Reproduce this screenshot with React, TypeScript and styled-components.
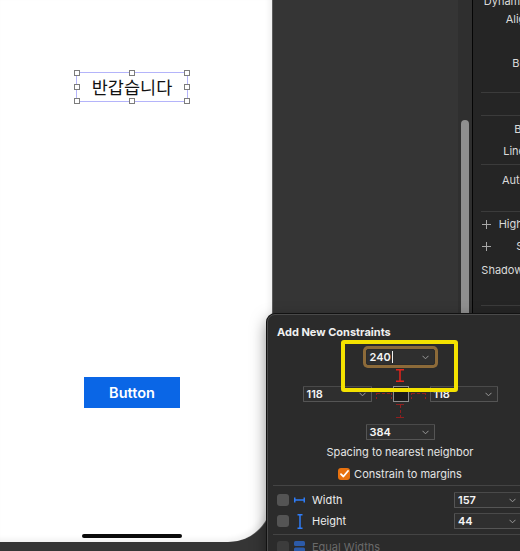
import React from "react";
import styled, { createGlobalStyle } from "styled-components";

const Global = createGlobalStyle`
  html, body { margin: 0; padding: 0; background: #353535; }
  body { font-family: Inter, "Noto Sans", sans-serif; }
`;

const Screen = styled.div`
  position: relative;
  width: 520px;
  height: 551px;
  overflow: hidden;
  display: flex;
  background: #353535;
  font-family: Inter, "Noto Sans", sans-serif;
`;

const CanvasArea = styled.div`
  width: 458px;
  flex: none;
  background: #353535;
`;

const Phone = styled.div`
  width: 272px;
  height: 542px;
  box-sizing: border-box;
  background: #ffffff;
  border-bottom-right-radius: 44px;
  padding-right: 8px;
  display: flex;
  flex-direction: column;
  align-items: center;
  box-shadow: 1px 0 0 #5e5e5e, inset -3px -3px 5px rgba(0, 0, 0, 0.06);
`;

const LabelFrame = styled.div`
  position: relative;
  margin-top: 72px;
  width: 112px;
  height: 30px;
  box-sizing: border-box;
  border: 1px solid #b4b4fa;
  display: flex;
  align-items: center;
  justify-content: center;
  font-family: "Noto Sans CJK KR", sans-serif;
  font-size: 17.5px;
  color: #111;
  line-height: 1;
`;

const Handle = styled.span<{ $x: number; $y: number }>`
  position: absolute;
  width: 6px;
  height: 6px;
  box-sizing: border-box;
  background: #fff;
  border: 1px solid #7c7c7c;
  left: calc(${(p) => p.$x}% - 3px);
  top: calc(${(p) => p.$y}% - 3px);
`;

const BlueButton = styled.div`
  margin-top: 275px;
  width: 96px;
  height: 31px;
  background: #0a66e6;
  color: #fff;
  display: flex;
  align-items: center;
  justify-content: center;
  font-size: 14.5px;
  font-weight: 600;
`;

const HomeIndicator = styled.div`
  margin-top: auto;
  margin-bottom: 4px;
  width: 100px;
  height: 4px;
  border-radius: 2px;
  background: #0a0a0a;
`;

const ScrollTrack = styled.div`
  width: 14px;
  flex: none;
  box-sizing: border-box;
  background: #2f2f2f;
  padding: 120px 0 0 3px;
  display: flex;
  flex-direction: column;
`;

const Thumb = styled.div`
  width: 8px;
  flex: 1;
  background: #8f8f8f;
  border-radius: 4px 4px 0 0;
`;

const Divider = styled.div`
  width: 1px;
  flex: none;
  background: #050505;
`;

const Inspector = styled.div`
  width: 160px;
  flex: none;
  background: #252525;
  display: flex;
  flex-direction: column;
  margin-top: -10px;
`;

const IRow = styled.div<{ $h: number }>`
  height: ${(p) => p.$h}px;
  display: grid;
  grid-template-columns: 85px 1fr;
  align-items: center;
`;

const ILabel = styled.div<{ $plus?: boolean }>`
  display: flex;
  align-items: center;
  justify-content: ${(p) => (p.$plus ? "space-between" : "flex-end")};
  padding-left: ${(p) => (p.$plus ? "9px" : "0")};
  white-space: nowrap;
  font-size: 11px;
  color: #dadada;
  line-height: 14px;
`;

const ISep = styled.div`
  height: 1px;
  margin-left: 8px;
  background: #3b3b3b;
  flex: none;
`;

const Gap = styled.div<{ $h: number }>`
  height: ${(p) => p.$h}px;
  flex: none;
`;

const Popover = styled.div`
  position: absolute;
  left: 267px;
  top: 314px;
  width: 266px;
  height: 260px;
  box-sizing: border-box;
  background: #2b2b2b;
  border: 1px solid #4a4a4a;
  border-radius: 8px;
  box-shadow: 0 0 0 1px #121212, 0 6px 16px rgba(0, 0, 0, 0.5);
  display: flex;
  flex-direction: column;
  align-items: center;
  padding-top: 10px;
  color: #e8e8e8;
`;

const Title = styled.div`
  align-self: stretch;
  padding-left: 9px;
  font-size: 11px;
  font-weight: 700;
  line-height: 14px;
  color: #f0f0f0;
`;

const Field = styled.div<{ $w?: number; $focus?: boolean }>`
  position: relative;
  width: ${(p) => p.$w ?? 69}px;
  height: 16px;
  box-sizing: border-box;
  background: #2f2f2f;
  border: 1px solid ${(p) => (p.$focus ? "#2a2a2a" : "#555555")};
  border-top-color: ${(p) => (p.$focus ? "#2a2a2a" : "#4a4a4a")};
  box-shadow: ${(p) => (p.$focus ? "0 0 0 3px #8c6a39" : "none")};
  border-radius: ${(p) => (p.$focus ? "2px" : "1px")};
  display: flex;
  align-items: center;
  padding-left: 3px;
  font-size: 11px;
  font-weight: 600;
  color: #f4f4f4;
  line-height: 14px;
`;

const Caret = styled.span`
  width: 1px;
  height: 12px;
  background: #f0f0f0;
  margin-left: 1px;
`;

const ChevronBox = styled.span`
  position: absolute;
  right: 5px;
  top: 5px;
  display: flex;
`;

const TopField = styled.div`
  margin-top: 10px;
`;

const IBeamBox = styled.div<{ $mt: number }>`
  margin-top: ${(p) => p.$mt}px;
  display: flex;
`;

const MidRow = styled.div`
  margin-top: 4px;
  display: grid;
  grid-template-columns: 69px 58px 68px;
  height: 16px;
`;

const Center = styled.div`
  position: relative;
  display: flex;
  align-items: center;
  justify-content: center;
`;

const Square = styled.div`
  width: 16px;
  height: 16px;
  box-sizing: border-box;
  background: #1c1c1c;
  border: 1px solid #8e8e8e;
`;

const BottomField = styled.div`
  margin-top: 6px;
`;

const Hint = styled.div`
  margin-top: 5px;
  font-size: 11px;
  line-height: 14px;
  color: #e4e4e4;
`;

const CheckRow = styled.div`
  margin-top: 8px;
  display: flex;
  align-items: center;
  gap: 4px;
  font-size: 11px;
  line-height: 14px;
  color: #e4e4e4;
`;

const OrangeBox = styled.span`
  width: 12px;
  height: 12px;
  border-radius: 3px;
  background: #e8720f;
  display: flex;
  align-items: center;
  justify-content: center;
`;

const PSep = styled.div<{ $mt: number }>`
  align-self: stretch;
  margin: ${(p) => p.$mt}px 0 0 5px;
  height: 1px;
  background: #444444;
  flex: none;
`;

const SizeRow = styled.div<{ $mt: number; $dim?: boolean }>`
  align-self: stretch;
  margin-top: ${(p) => p.$mt}px;
  height: 16px;
  display: flex;
  align-items: center;
  padding: 0 10px 0 9px;
  font-size: 11px;
  line-height: 14px;
  color: ${(p) => (p.$dim ? "#6a6a6a" : "#ececec")};
`;

const GrayBox = styled.span<{ $dim?: boolean }>`
  width: 12px;
  height: 12px;
  border-radius: 3px;
  background: ${(p) => (p.$dim ? "#3c3c3c" : "#545454")};
  flex: none;
`;

const IconSlot = styled.span`
  width: 11px;
  margin-left: 5px;
  display: flex;
  justify-content: center;
  flex: none;
`;

const SizeLabel = styled.span`
  margin-left: 7px;
`;

const FieldSlot = styled.div`
  margin-left: auto;
`;

const Highlight = styled.div`
  position: absolute;
  left: 73px;
  top: 25px;
  width: 117px;
  height: 52px;
  box-sizing: border-box;
  border: 4px solid #f4e200;
  border-radius: 3px;
`;

const Chevron = () => (
  <ChevronBox>
    <svg width="7" height="5" viewBox="0 0 7 5">
      <polyline points="0.5,0.8 3.5,3.8 6.5,0.8" fill="none" stroke="#9a9a9a" strokeWidth="1" />
    </svg>
  </ChevronBox>
);

const Plus = () => (
  <svg width="9" height="9" viewBox="0 0 9 9">
    <path d="M4.5 0v9M0 4.5h9" stroke="#a8a8a8" strokeWidth="1" />
  </svg>
);

const handles: [number, number][] = [
  [0, 0], [50, 0], [100, 0],
  [0, 50], [100, 50],
  [0, 100], [50, 100], [100, 100],
];

export default function App() {
  return (
    <>
      <Global />
      <Screen>
        <CanvasArea>
          <Phone>
            <LabelFrame>
              반갑습니다
              {handles.map(([x, y], i) => (
                <Handle key={i} $x={x} $y={y} />
              ))}
            </LabelFrame>
            <BlueButton>Button</BlueButton>
            <HomeIndicator />
          </Phone>
        </CanvasArea>
        <ScrollTrack>
          <Thumb />
        </ScrollTrack>
        <Divider />
        <Inspector>
          <IRow $h={22}><ILabel>Dynamic Type</ILabel></IRow>
          <IRow $h={14}><ILabel>Alignment</ILabel></IRow>
          <Gap $h={30} />
          <IRow $h={14}><ILabel>Behavior</ILabel></IRow>
          <Gap $h={22} />
          <ISep />
          <Gap $h={22} />
          <ISep />
          <IRow $h={26}><ILabel>Baseline</ILabel></IRow>
          <IRow $h={18}><ILabel>Line Break</ILabel></IRow>
          <Gap $h={4} />
          <ISep />
          <IRow $h={30}><ILabel>Autoshrink</ILabel></IRow>
          <Gap $h={16} />
          <ISep />
          <IRow $h={24}><ILabel $plus><Plus /><span>Highlighted</span></ILabel></IRow>
          <IRow $h={20}><ILabel $plus><Plus /><span>Shadow</span></ILabel></IRow>
          <IRow $h={28}><ILabel>Shadow Offset</ILabel></IRow>
          <Gap $h={21} />
          <ISep />
          <IRow $h={24}><ILabel $plus><Plus /><span>Enabled</span></ILabel></IRow>
        </Inspector>

        <Popover>
          <Title>Add New Constraints</Title>
          <TopField>
            <Field $focus>
              240<Caret />
              <Chevron />
            </Field>
          </TopField>
          <IBeamBox $mt={4}>
            <svg width="16" height="13" viewBox="0 0 16 13">
              <path d="M8 0.5v12M4 0.75h8M4 12.25h8" stroke="#e3241c" strokeWidth="1.5" fill="none" />
            </svg>
          </IBeamBox>
          <MidRow>
            <Field>
              118
              <Chevron />
            </Field>
            <Center>
              <svg width="58" height="16" viewBox="0 0 58 16" style={{ position: "absolute", left: 0, top: 0 }}>
                <g stroke="#8f2020" strokeWidth="1" fill="none">
                  <path d="M4.5 3v10M19.5 3v10M39.5 3v10M53.5 3v10" strokeDasharray="2 2" />
                  <path d="M5 7.5h14M40 7.5h13" strokeDasharray="3 2" />
                </g>
              </svg>
              <Square />
            </Center>
            <Field $w={68}>
              118
              <Chevron />
            </Field>
          </MidRow>
          <IBeamBox $mt={2}>
            <svg width="16" height="14" viewBox="0 0 16 14">
              <g stroke="#8f2020" strokeWidth="1" fill="none">
                <path d="M4 0.5h8M4 13.5h8" />
                <path d="M8.5 1v12" strokeDasharray="3 2" />
              </g>
            </svg>
          </IBeamBox>
          <BottomField>
            <Field>
              384
              <Chevron />
            </Field>
          </BottomField>
          <Hint>Spacing to nearest neighbor</Hint>
          <CheckRow>
            <OrangeBox>
              <svg width="9" height="8" viewBox="0 0 9 8">
                <polyline points="1,4.2 3.4,6.5 8,1" fill="none" stroke="#fff" strokeWidth="1.8" strokeLinecap="round" strokeLinejoin="round" />
              </svg>
            </OrangeBox>
            Constrain to margins
          </CheckRow>
          <PSep $mt={4} />
          <SizeRow $mt={6}>
            <GrayBox />
            <IconSlot>
              <svg width="11" height="6" viewBox="0 0 11 6">
                <path d="M0.75 0.5v5M10.25 0.5v5M1 3h9" stroke="#2f7cf6" strokeWidth="1.5" fill="none" />
              </svg>
            </IconSlot>
            <SizeLabel>Width</SizeLabel>
            <FieldSlot>
              <Field $w={68}>
                157
                <Chevron />
              </Field>
            </FieldSlot>
          </SizeRow>
          <SizeRow $mt={5}>
            <GrayBox />
            <IconSlot>
              <svg width="6" height="15" viewBox="0 0 6 15">
                <path d="M0.5 0.75h5M0.5 14.25h5M3 1v13" stroke="#2f7cf6" strokeWidth="1.5" fill="none" />
              </svg>
            </IconSlot>
            <SizeLabel>Height</SizeLabel>
            <FieldSlot>
              <Field $w={68}>
                44
                <Chevron />
              </Field>
            </FieldSlot>
          </SizeRow>
          <PSep $mt={5} />
          <SizeRow $mt={4} $dim>
            <GrayBox $dim />
            <IconSlot>
              <svg width="11" height="12" viewBox="0 0 11 12">
                <rect x="0" y="0" width="11" height="5" rx="1.5" fill="#2c5aa8" />
                <rect x="0" y="6.5" width="11" height="5" rx="1.5" fill="#2c5aa8" />
              </svg>
            </IconSlot>
            <SizeLabel>Equal Widths</SizeLabel>
          </SizeRow>
          <Highlight />
        </Popover>
      </Screen>
    </>
  );
}
